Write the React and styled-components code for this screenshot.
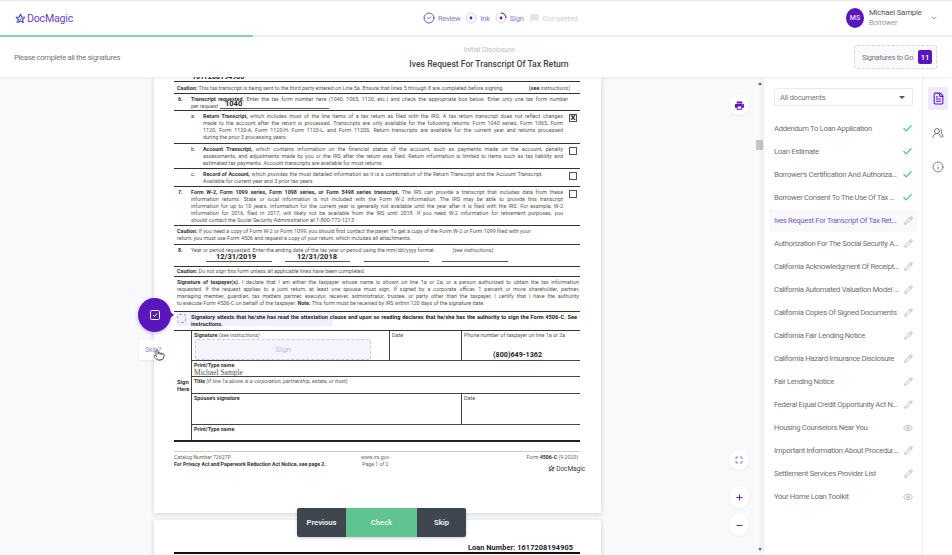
import React from "react";
import styled, { createGlobalStyle } from "styled-components";
import { Check, ChevronDown, Eye, FileText, Flag, Info, Maximize, Minus, Pencil, Plus, Pointer, UsersRound, CircleCheck } from "lucide-react";

const Global = createGlobalStyle`
  html, body { margin: 0; padding: 0; background: #fff; }
  body { font-family: Roboto, "Liberation Sans", sans-serif; }
  * { box-sizing: border-box; }
`;

const Shell = styled.div`
  width: 952px; height: 555px; overflow: hidden; display: flex; flex-direction: column; background: #fff;
  border-top: 1px solid #e9e9ee;
`;
const TopBar = styled.header`
  height: 34px; flex: none; display: grid; grid-template-columns: 408px auto 1fr; align-items: center; padding: 0 0 0 15px;
`;
const Logo = styled.div`
  display: flex; align-items: center; gap: 1px; color: #6a3fc4; font-size: 10.6px; letter-spacing: -.2px;
`;
const Steps = styled.nav`display: flex; align-items: center; gap: 5px;`;
const Step = styled.div`
  display: flex; align-items: center; gap: 3px; font-size: 7.6px; letter-spacing: -.25px; color: ${p => p.$off ? "#cfcfd6" : "#8f78cf"};
`;
const User = styled.div`display: flex; align-items: center; justify-self: end; padding-right: 14px;`;
const Avatar = styled.div`
  width: 18px; height: 20px; border-radius: 50%; background: #5a16bd; color: #e8defa; font-size: 7px; font-weight: 500;
  display: flex; align-items: center; justify-content: center; margin-right: 5px;
`;
const UserText = styled.div`width: 61px; line-height: 10.5px;`;
const UserName = styled.div`font-size: 7.8px; letter-spacing: -.2px; color: #555; white-space: nowrap;`;
const UserRole = styled.div`font-size: 7.4px; letter-spacing: -.2px; color: #9a9aa2;`;
const ProgressTrack = styled.div`height: 2px; flex: none; background: #f0f0f3;`;
const ProgressFill = styled.div`height: 100%; background: #86d8ae;`;
const SubBar = styled.div`
  height: 40px; flex: none; display: grid; grid-template-columns: 380px 190px 1fr; align-items: center; padding: 0 15px 0 14px;
  position: relative; z-index: 2; background: #fff; box-shadow: 0 1px 3px rgba(0,0,0,.08);
`;
const Hint = styled.div`font-size: 7.7px; letter-spacing: -.33px; color: #777;`;
const DocTitle = styled.div`text-align: center; padding-top: 1px;`;
const DocGroup = styled.div`font-size: 7.4px; letter-spacing: -.2px; color: #c2c2c8; margin-bottom: 4px; line-height: 9px;`;
const DocName = styled.div`font-size: 8.6px; font-weight: 500; color: #444; line-height: 12px;`;
const ToGo = styled.div`
  justify-self: end; width: 83px; height: 24px; border: 1px dashed #d8d0ec; background: #fafafd; border-radius: 3px;
  display: flex; align-items: center; justify-content: space-between; padding: 0 4px 0 7px; font-size: 7.6px; letter-spacing: -.3px; color: #777; white-space: nowrap;
`;
const Count = styled.span`
  width: 14px; height: 14px; background: #5a16bd; color: #fff; border-radius: 2px; font-size: 7.6px; font-weight: 500; letter-spacing: 0;
  display: flex; align-items: center; justify-content: center;
`;
const Main = styled.main`flex: 1; min-height: 0; display: flex;`;
const Viewer = styled.section`
  width: 764px; flex: none; display: flex; position: relative; background: #f8f9fb; overflow: hidden;
`;
const Pages = styled.div`flex: 1; padding-left: 154px; min-width: 0;`;
const Page = styled.article`
  width: 447px; background: #fff; box-shadow: 0 1px 5px rgba(0,0,0,.17); padding: 0 21px 0 20px;
  height: ${p => p.$h}px; margin-bottom: 7px; overflow: hidden; color: #333;
`;
const Scrollbar = styled.div`
  width: 8px; flex: none; display: flex; flex-direction: column; align-items: center; justify-content: space-between; padding: 3px 0; position: relative;
  font-size: 5px; color: #444;
`;
const Thumb = styled.div`position: absolute; top: 63px; left: 0; width: 7px; height: 10px; background: #c6c6c8;`;
const ClippedNo = styled.div`
  height: 4px; overflow: hidden; font-size: 7px; font-weight: 700; color: #222; line-height: 0; padding-left: 18px;
`;
const Row = styled.div`
  height: ${p => p.$h}px; border-top: ${p => p.$thick ? "1.4px solid #333" : "1px solid #555"}; position: relative;
  display: flex; font-size: 5.4px; line-height: 7.1px; color: #555; overflow: hidden; padding-top: ${p => p.$pt ?? 2}px;
`;
const Num = styled.div`width: ${p => p.$w ?? 17}px; flex: none; padding-left: ${p => p.$pl ?? 4}px; font-weight: ${p => p.$light ? 400 : 700}; color: #333;`;
const Body = styled.div`flex: 1; min-width: 0; padding-right: ${p => p.$pr ?? 3}px;`;
const Line = styled.div`
  white-space: nowrap; text-align: justify; text-align-last: ${p => p.$end ? "left" : "justify"};
`;
const B = styled.b`color: #333;`;
const Em = styled.i``;
const Filled = styled.span`
  position: absolute; font-size: ${p => p.$s ?? 7.5}px; font-weight: 700; color: #222; line-height: 8px;
`;
const Underline = styled.div`position: absolute; height: 1px; background: #555;`;
const Box = styled.div`
  width: 8px; height: 8px; border: 1px solid #555; flex: none; margin: 1px 3px 0 3px; font-size: 8px; line-height: 6px; text-align: center; font-weight: 700; color: #222;
`;
const AttestRow = styled(Row)`color: #222; font-weight: 700; font-size: 5.6px; line-height: 7px;`;
const Highlight = styled.div`position: absolute; left: 4px; top: 0; width: 155px; height: 14px; background: rgba(120,90,220,.09);`;
const AttestBox = styled.div`width: 9px; height: 9px; border: 1px dashed #a99ad8; border-radius: 2px; margin: 0 5px 0 3px; flex: none;`;
const SignGrid = styled.div`
  display: grid; grid-template-columns: 18px 198px 72px 1fr; grid-template-rows: 30px 16px 17px 31px 15px;
  border-top: 1.4px solid #333; border-bottom: 2px solid #222; font-size: 5.4px; line-height: 7px; color: #555;
`;
const SignLabel = styled.div`
  grid-row: 1 / 6; grid-column: 1; border-right: 1px solid #444; display: flex; align-items: center; font-weight: 700; color: #333; line-height: 7px; padding: 1px 0 0 3px; font-size: 5.8px;
`;
const Cell = styled.div`
  border-bottom: ${p => p.$last ? "none" : "1px solid #444"}; border-right: ${p => p.$edge ? "1px solid #444" : "none"}; padding: 1px 2px; position: relative;
  grid-column: ${p => p.$span ? "2 / 5" : "auto"}; overflow: hidden;
`;
const SignField = styled.div`
  position: absolute; left: 3px; top: 8px; width: 176px; height: 21px; border: 1px dashed #cfc4ee; background: #f6f3fd; border-radius: 2px;
  display: flex; align-items: center; justify-content: center; color: #c6b9ea; font-size: 8px;
`;
const Script = styled.div`font-family: "Liberation Serif", serif; font-size: 7.5px; color: #555; line-height: 7px;`;
const Phone = styled.div`position: absolute; left: 31px; bottom: 2px; font-size: 7.2px; font-weight: 700; color: #222;`;
const FormFoot = styled.footer`
  margin-top: 9px; border-top: 1.5px solid #ccc; display: grid; grid-template-columns: 187px 120px 1fr; padding-top: 2px; font-size: 5.2px; line-height: 6.5px; color: #666; width: 406px;
`;
const FootRight = styled.div`text-align: right; padding-right: 2px;`;
const GrayLogo = styled.div`
  margin-right: -5px; display: flex; justify-content: flex-end; align-items: center; gap: 1px; font-size: 6.6px; letter-spacing: -.1px; color: #444; height: 9px; margin-top: -3px;
`;
const LoanNo = styled.div`
  padding-top: 24px; text-align: right; font-size: 7.3px; font-weight: 700; color: #222; padding-right: 7px; line-height: 8px; letter-spacing: .1px;
`;
const HeavyRule = styled.div`height: 2px; background: #111; margin-top: 0;`;
const Bubble = styled.button`
  position: absolute; left: 138px; top: 221px; width: 33px; height: 34px; border-radius: 50%; background: #5a16bd; border: none; color: #fff; padding: 0;
  display: flex; align-items: center; justify-content: center; box-shadow: 0 1px 4px rgba(90,22,189,.3);
  &::after { content: ""; position: absolute; right: -3px; top: 13px; border-left: 5px solid #5a16bd; border-top: 4px solid transparent; border-bottom: 4px solid transparent; }
`;
const SkipTip = styled.div`
  position: absolute; left: 139px; top: 263px; width: 28px; height: 20px; background: #fff; border-radius: 2px; box-shadow: 0 1px 3px rgba(0,0,0,.07);
  font-size: 7px; letter-spacing: -.1px; color: #9c86d8; display: flex; align-items: center; padding-left: 6px;
  & svg { position: absolute; left: 14px; top: 9px; fill: #fff; color: #333; }
`;
const ActionBar = styled.div`
  position: absolute; left: 297px; top: 431px; height: 29px; display: flex; border-radius: 2px; overflow: hidden; box-shadow: 0 1px 3px rgba(0,0,0,.2);
`;
const Action = styled.button`
  width: ${p => p.$w}px; border: none; padding: 0; background: ${p => p.$go ? "#5fc48f" : "#3f4650"}; color: ${p => p.$go ? "#dcf5e7" : "#e7e8ea"};
  font: 700 7.6px Roboto, sans-serif;
`;
const Tool = styled.button`
  position: absolute; left: 729px; top: ${p => p.$top}px; width: 20px; height: ${p => p.$h ?? 20}px; border-radius: 50%; border: none; background: #fff; padding: 0; color: #5a16bd;
  display: flex; align-items: center; justify-content: center; box-shadow: 0 1px 3px rgba(0,0,0,.05);
`;
const Side = styled.aside`
  width: 158px; flex: none; padding: 11px 5px 0; position: relative; box-shadow: -2px 0 5px rgba(0,0,0,.06); background: #fff;
`;
const Select = styled.div`
  margin: 0 4px 0 5px; height: 18px; border: 1px solid #e9e9ee; border-radius: 2px; display: flex; align-items: center; justify-content: space-between;
  padding: 0 7px 0 5px; font-size: 7.6px; letter-spacing: -.25px; color: #777;
  &::after { content: ""; border-top: 3px solid #555; border-left: 3px solid transparent; border-right: 3px solid transparent; }
`;
const DocList = styled.ul`list-style: none; margin: 11px 0 0; padding: 0;`;
const DocItem = styled.li`
  height: 23px; display: flex; align-items: center; justify-content: space-between; padding: 0 4px 0 5px; font-size: 7.7px; letter-spacing: -.33px;
  color: ${p => p.$active ? "#7a57c9" : "#6f6f75"}; background: ${p => p.$active ? "#f9f9fb" : "transparent"};
`;
const DocLabel = styled.span`width: 125px; white-space: nowrap; overflow: hidden; text-overflow: ellipsis;`;
const Rail = styled.nav`
  flex: 1; border-left: 1px solid #efeff2; display: flex; flex-direction: column; align-items: center; padding-top: 10px;
`;
const RailTab = styled.div`
  width: 20px; height: 23px; border-radius: 2px; margin-bottom: 11px; display: flex; align-items: center; justify-content: center; margin-left: 1px;
  background: ${p => p.$on ? "#efeafb" : "transparent"}; color: ${p => p.$on ? "#5a16bd" : "#666"};
`;

const Star = ({ size = 11, color = "#6a3fc4", accent = "#4fc08d" }) => (
  <svg width={size} height={size} viewBox="0 0 24 24" fill="none">
    <path d="M12 2.5l2.8 6.3 6.7.7-5 4.6 1.4 6.7-5.9-3.4-5.9 3.4 1.4-6.7-5-4.6 6.7-.7z" stroke={color} strokeWidth="2.6" strokeLinejoin="round" />
    <path d="M3 19L20 9" stroke={accent} strokeWidth="2.8" strokeLinecap="round" />
  </svg>
);
const Dot = ({ partial }) => (
  <svg width="12" height="12" viewBox="0 0 12 12" fill="none">
    <circle cx="6" cy="6" r="5" stroke="#d9d0f0" strokeWidth="1" />
    {partial && <path d="M6 1a5 5 0 0 1 5 5" stroke="#5a16bd" strokeWidth="1" />}
    <circle cx="6" cy="6" r="1.4" fill="#5a16bd" />
  </svg>
);
const PrintGlyph = () => (
  <svg width="11" height="11" viewBox="0 0 24 24" fill="#5a16bd">
    <path d="M19 8H5c-1.66 0-3 1.34-3 3v6h4v4h12v-4h4v-6c0-1.66-1.34-3-3-3zm-3 11H8v-5h8v5zm3-7c-.55 0-1-.45-1-1s.45-1 1-1 1 .45 1 1-.45 1-1 1zm-1-9H6v4h12V3z" />
  </svg>
);

const rows = {
  a: ["Return Transcript,|which includes most of the    line items of a tax return as filed with the IRS. A tax return transcript does not reflect changes",
    "made to the account after the return is processed. Transcripts are only available for the following returns: Form 1040 series, Form 1065, Form",
    "1120, Form 1120-A, Form 1120-H, Form 1120-L, and Form 1120S. Return transcripts are available for the current year and returns processed",
    "during the prior 3 processing years"],
  b: ["Account Transcript,|which contains information on the financial status of the account, such as payments made on the account, penalty",
    "assessments, and adjustments made by you or the IRS after the return was filed. Return information is limited to items such as tax liability and",
    "estimated tax payments. Account transcripts are available for most returns"],
  c: ["Record of Account,|which provides the most detailed information as it is a combination of the Return Transcript and the Account Transcript.",
    "Available for current year and 3 prior tax years"],
  seven: ["Form W-2, Form 1099 series, Form 1098 series, or Form 5498 series transcript.|The IRS can provide a transcript that includes data from these",
    "information returns. State or local information is not included with the Form W-2 information. The IRS may be able to provide this transcript",
    "information for up to 10 years. Information for the current year is generally not available until the year after it is filed with the IRS. For example, W-2",
    "information for 2016, filed in 2017, will likely   not be available from the IRS until 2018. If you need W-2 information for retirement purposes, you",
    "should contact the Social Security Administration at 1-800-772-1213"],
  sig: ["Signature of taxpayer(s).|I declare that I am either the taxpayer whose    name is shown on line 1a or 2a, or a person authorized to obtain the tax information",
    "requested. If the request applies to a joint return, at least one spouse must sign. If signed by a corporate officer, 1 percent or more shareholder, partner,",
    "managing member, guardian, tax matters partner, executor, receiver, administrator, trustee, or party other than the taxpayer, I certify that I have the authority",
    "to execute Form 4506-C on behalf of the taxpayer.    Note:|This form must be received by IRS within 120 days of the signature date."],
};

const Lines = ({ items }) => items.map((t, i) => {
  const parts = t.split("|");
  const last = i === items.length - 1;
  return (
    <Line key={i} $end={last}>
      {parts.length > 1 ? (<>{last ? <>{parts[0].split("Note:")[0]}<B>Note: </B></> : <B>{parts[0]} </B>}{parts[1]}</>) : t}
    </Line>
  );
});

const docs = [
  ["Addendum To Loan Application", "done"], ["Loan Estimate", "done"], ["Borrower's Certification And Authorization", "done"],
  ["Borrower Consent To The Use Of Tax Return", "done"], ["Ives Request For Transcript Of Tax Return", "edit", true],
  ["Authorization For The Social Security Administration", "edit"], ["California Acknowledgment Of Receipt Of Disclosure", "edit"],
  ["California Automated Valuation Model Notice", "edit"], ["California Copies Of Signed Documents", "edit"],
  ["California Fair Lending Notice", "edit"], ["California Hazard Insurance Disclosure", "edit"], ["Fair Lending Notice", "edit"],
  ["Federal Equal Credit Opportunity Act Notice", "edit"], ["Housing Counselors Near You", "view"],
  ["Important Information About Procedures", "edit"], ["Settlement Services Provider List", "edit"], ["Your Home Loan Toolkit", "view"],
];
const StatusIcon = ({ kind }) => {
  if (kind === "done") return <Check size={11} color="#4fc08d" strokeWidth={2.5} />;
  if (kind === "view") return <Eye size={10} color="#b5b5ba" strokeWidth={2} />;
  return <Pencil size={9} color="#a8a8ad" strokeWidth={2} />;
};

export default function App() {
  return (
    <Shell>
      <Global />
      <TopBar>
        <Logo><Star />DocMagic</Logo>
        <Steps>
          <Step><CircleCheck size={12} color="#5a16bd" strokeWidth={1.5} />Review</Step>
          <Step><Dot />Ink</Step>
          <Step><Dot partial />Sign</Step>
          <Step $off><Flag size={11} color="#e4e4e8" fill="#e4e4e8" />Completed</Step>
        </Steps>
        <User>
          <Avatar>MS</Avatar>
          <UserText><UserName>Michael Sample</UserName><UserRole>Borrower</UserRole></UserText>
          <ChevronDown size={8} color="#666" />
        </User>
      </TopBar>
      <ProgressTrack><ProgressFill style={{ width: 253 }} /></ProgressTrack>
      <SubBar>
        <Hint>Please complete all the signatures</Hint>
        <DocTitle>
          <DocGroup>Initial Disclosure</DocGroup>
          <DocName>Ives Request For Transcript Of Tax Return</DocName>
        </DocTitle>
        <ToGo>Signatures to Go<Count>11</Count></ToGo>
      </SubBar>
      <Main>
        <Viewer>
          <Pages>
            <Page $h={436}>
              <ClippedNo>1617208194905</ClippedNo>
              <Row $h={12} $thick $pt={3} style={{ paddingLeft: 3 }}>
                <Line $end style={{ flex: 1, display: "flex", justifyContent: "space-between", paddingRight: 10 }}>
                  <span><B>Caution:</B> This tax transcript is being sent to the third party entered on Line 5a. Ensure that lines 5 through 8 are completed before signing.</span>
                  <span><B>(see</B> <Em>instructions)</Em></span>
                </Line>
              </Row>
              <Row $h={17} $thick>
                <Num>6.</Num>
                <Body $pr={12}>
                  <Line><B>Transcript requested.</B> Enter the tax form number here (1040, 1065, 1120, etc.) and      check the appropriate box below. Enter only one tax form number</Line>
                  <Line $end>per request</Line>
                  <Filled style={{ left: 51, top: 6 }}>1040</Filled>
                  <Underline style={{ left: 46, width: 109, top: 14 }} />
                </Body>
              </Row>
              <Row $h={33} $thick>
                <Num $light $w={29} $pl={17}>a.</Num>
                <Body><Lines items={rows.a} /></Body>
                <Box style={{ marginRight: 3 }}>X</Box>
              </Row>
              <Row $h={25} $thick>
                <Num $w={29} $pl={17} $light>b.</Num>
                <Body><Lines items={rows.b} /></Body>
                <Box />
              </Row>
              <Row $h={18} $thick>
                <Num $w={29} $pl={17} $light>c.</Num>
                <Body $pr={23}><Lines items={rows.c} /></Body>
                <Box />
              </Row>
              <Row $h={39} $thick>
                <Num>7.</Num>
                <Body><Lines items={rows.seven} /></Body>
                <Box />
              </Row>
              <Row $h={19} $thick style={{ paddingLeft: 3, display: "block" }}>
                <Line $end><B>Caution:</B> If you need a copy of Form W-2 or Form 1099, you should first contact the payer. To get a copy of the Form W-2 or Form 1099 filed with your</Line>
                <Line $end>return, you must use Form 4506 and request a copy of your return, which includes all attachments.</Line>
              </Row>
              <Row $h={22} $thick>
                <Num $w={17}>8.</Num>
                <Body>
                  <Line $end>Year or period requested. Enter the ending date of the tax year or period using the mm/dd/yyyy format &nbsp;&nbsp;&nbsp;&nbsp;&nbsp;&nbsp;&nbsp;&nbsp;&nbsp;&nbsp;&nbsp;&nbsp;&nbsp;<Em>(see instructions)</Em></Line>
                </Body>
                <Filled style={{ left: 42, top: 8 }}>12/31/2019</Filled>
                <Filled style={{ left: 123, top: 8 }}>12/31/2018</Filled>
                <Underline style={{ left: 32, width: 66, top: 16 }} />
                <Underline style={{ left: 111, width: 65, top: 16 }} />
                <Underline style={{ left: 190, width: 65, top: 16 }} />
                <Underline style={{ left: 268, width: 66, top: 16 }} />
              </Row>
              <Row $h={10} $thick $pt={1} style={{ paddingLeft: 3 }}>
                <Line $end><B>Caution:</B> Do not sign this form unless all applicable lines have been completed.</Line>
              </Row>
              <Row $h={35} $thick style={{ paddingLeft: 3, display: "block", paddingRight: 1 }}>
                <Lines items={rows.sig} />
              </Row>
              <AttestRow $h={19} $thick>
                <Highlight />
                <AttestBox />
                <Body>
                  <Line>Signatory attests that he/she has read the attestation clause and upon so reading declares that he/she has the authority to sign the Form 4506-C. See</Line>
                  <Line $end>instructions.</Line>
                </Body>
              </AttestRow>
              <SignGrid>
                <SignLabel>Sign<br />Here</SignLabel>
                <Cell $edge><B>Signature</B> <Em>(see instructions)</Em><SignField>Sign</SignField></Cell>
                <Cell $edge>Date</Cell>
                <Cell>Phone number of taxpayer on line 1a or 2a<Phone>(800)649-1362</Phone></Cell>
                <Cell $span><B>Print/Type name</B><Script>Michael Sample</Script></Cell>
                <Cell $span><B>Title</B> <Em>(if line 1a above is a corporation, partnership, estate, or trust)</Em></Cell>
                <Cell style={{ gridColumn: "2 / 4", borderRight: "1px solid #444" }}><B>Spouse's signature</B></Cell>
                <Cell>Date</Cell>
                <Cell $span $last><B>Print/Type name</B></Cell>
              </SignGrid>
              <FormFoot>
                <div>Catalog Number 72627P<br /><B>For Privacy Act and Paperwork Reduction Act Notice, see page 2.</B></div>
                <div>www.irs.gov<br />&nbsp;Page 1 of 2</div>
                <FootRight>Form <B>4506-C</B> (9-2020)</FootRight>
              </FormFoot>
              <GrayLogo><Star size={7} color="#444" accent="#444" />DocMagic</GrayLogo>
            </Page>
            <Page $h={40}>
              <LoanNo>Loan Number: 1617208194905</LoanNo>
              <HeavyRule />
            </Page>
          </Pages>
          <Scrollbar><span>▲</span><Thumb /><span>▼</span></Scrollbar>
          <Bubble aria-label="Check"><svg width="12" height="12" viewBox="0 0 24 24" fill="none" stroke="#fff" strokeWidth="2"><rect x="3" y="3" width="18" height="18" rx="2.5" /><path d="M8 12l3 3 5-6" /></svg></Bubble>
          <SkipTip>Skip?<Pointer size={12} strokeWidth={1.6} /></SkipTip>
          <ActionBar>
            <Action $w={49}>Previous</Action>
            <Action $w={71} $go>Check</Action>
            <Action $w={49}>Skip</Action>
          </ActionBar>
          <Tool $top={18} aria-label="Print"><PrintGlyph /></Tool>
          <Tool $top={373} aria-label="Fullscreen"><Maximize size={8} strokeWidth={2} /></Tool>
          <Tool $top={409} $h={22} aria-label="Zoom in"><Plus size={9} strokeWidth={2.5} /></Tool>
          <Tool $top={437} $h={22} aria-label="Zoom out"><Minus size={9} strokeWidth={2.5} /></Tool>
        </Viewer>
        <Side>
          <Select>All documents</Select>
          <DocList>
            {docs.map(([name, kind, active]) => (
              <DocItem key={name} $active={active}>
                <DocLabel>{name}</DocLabel>
                <StatusIcon kind={kind} />
              </DocItem>
            ))}
          </DocList>
        </Side>
        <Rail>
          <RailTab $on><FileText size={13} strokeWidth={2} /></RailTab>
          <RailTab><UsersRound size={12} strokeWidth={1.8} /></RailTab>
          <RailTab><Info size={12} strokeWidth={1.6} /></RailTab>
        </Rail>
      </Main>
    </Shell>
  );
}
